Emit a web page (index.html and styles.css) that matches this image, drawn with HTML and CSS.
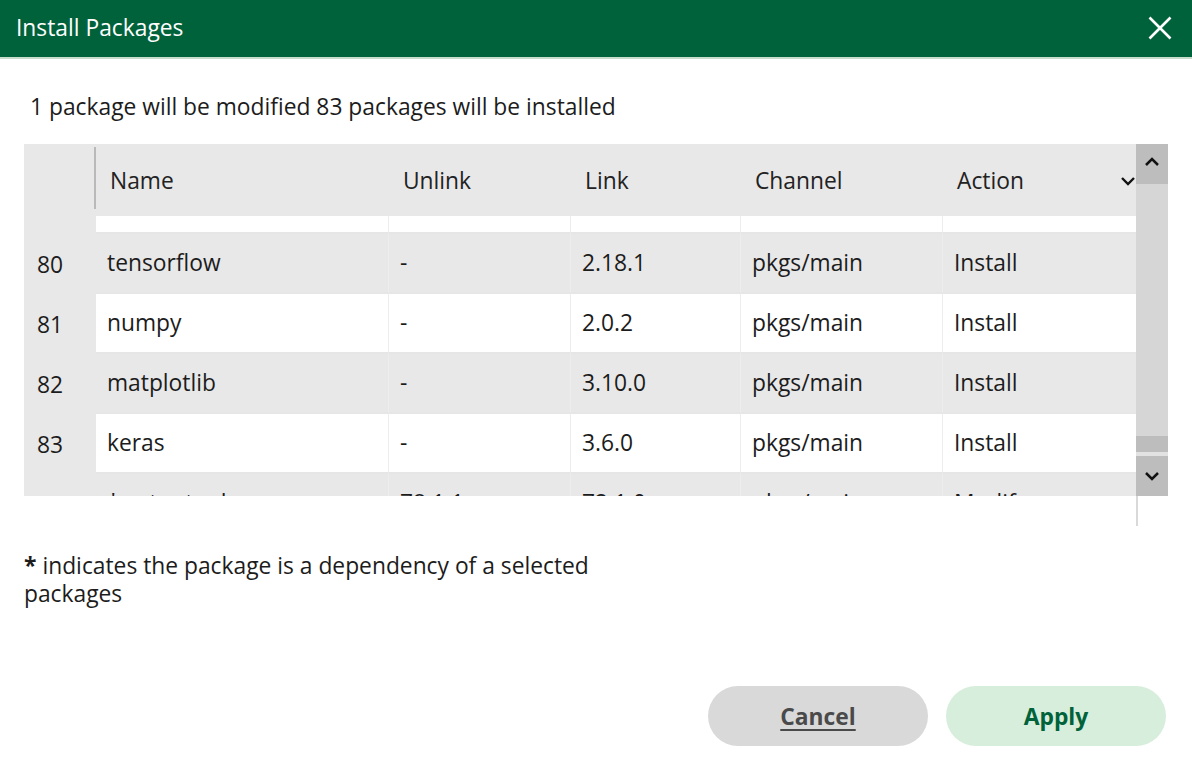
FILE: index.html
```html
<!DOCTYPE html>
<html lang="en">
<head>
<meta charset="utf-8">
<title>Install Packages</title>
<link rel="stylesheet" href="styles.css">
</head>
<body>
<div class="dialog">
  <header class="titlebar">
    <h1 class="title">Install Packages</h1>
    <button class="close" aria-label="Close">
      <svg width="24" height="24" viewBox="0 0 24 24"><path d="M1.5 1.5 L22.5 22.5 M22.5 1.5 L1.5 22.5" stroke="#fff" stroke-width="2.6" fill="none"/></svg>
    </button>
  </header>
  <main class="content">
    <p class="summary">1 package will be modified 83 packages will be installed</p>
    <div class="table-wrap">
      <div class="table">
        <div class="thead">
          <div class="th-index"></div>
          <div class="th c-name">Name</div>
          <div class="th c-unlink">Unlink</div>
          <div class="th c-link">Link</div>
          <div class="th c-channel">Channel</div>
          <div class="th c-action">Action
            <svg class="sort" width="16" height="10" viewBox="0 0 16 10"><path d="M2 2 L8 8 L14 2" stroke="#111" stroke-width="2.4" fill="none"/></svg>
          </div>
        </div>
        <div class="viewport">
          <div class="rows">
            <div class="row odd"><div class="idx"></div><div class="td c-name"></div><div class="td c-unlink"></div><div class="td c-link"></div><div class="td c-channel"></div><div class="td c-action"></div></div>
            <div class="row even"><div class="idx">80</div><div class="td c-name">tensorflow</div><div class="td c-unlink">-</div><div class="td c-link">2.18.1</div><div class="td c-channel">pkgs/main</div><div class="td c-action">Install</div></div>
            <div class="row odd"><div class="idx">81</div><div class="td c-name">numpy</div><div class="td c-unlink">-</div><div class="td c-link">2.0.2</div><div class="td c-channel">pkgs/main</div><div class="td c-action">Install</div></div>
            <div class="row even"><div class="idx">82</div><div class="td c-name">matplotlib</div><div class="td c-unlink">-</div><div class="td c-link">3.10.0</div><div class="td c-channel">pkgs/main</div><div class="td c-action">Install</div></div>
            <div class="row odd"><div class="idx">83</div><div class="td c-name">keras</div><div class="td c-unlink">-</div><div class="td c-link">3.6.0</div><div class="td c-channel">pkgs/main</div><div class="td c-action">Install</div></div>
            <div class="row even"><div class="idx">84</div><div class="td c-name">* setuptools</div><div class="td c-unlink">78.1.1</div><div class="td c-link">72.1.0</div><div class="td c-channel">pkgs/main</div><div class="td c-action">Modify</div></div>
          </div>
        </div>
      </div>
      <div class="vscroll">
        <div class="sbtn sbtn-up">
          <svg width="16" height="10" viewBox="0 0 16 10"><path d="M2 8 L8 2 L14 8" stroke="#111" stroke-width="2.5" fill="none"/></svg>
        </div>
        <div class="track"><div class="thumb"></div></div>
        <div class="sgap"></div>
        <div class="sbtn">
          <svg width="16" height="10" viewBox="0 0 16 10"><path d="M2 2 L8 8 L14 2" stroke="#111" stroke-width="2.5" fill="none"/></svg>
        </div>
      </div>
    </div>
    <div class="hscroll"></div>
    <p class="note"><b class="mark">*</b>indicates the package is a dependency of a selected packages</p>
    <div class="actions">
      <button class="btn btn-cancel">Cancel</button>
      <button class="btn btn-apply">Apply</button>
    </div>
  </main>
</div>
</body>
</html>
```

FILE: styles.css
```css
* { box-sizing: border-box; }
html, body { margin: 0; padding: 0; background: #fff; }
body {
  font-family: "Open Sans", "Noto Sans", sans-serif;
  font-size: 22.8px;
  color: #1c1c1c;
  width: 1192px;
  height: 768px;
  overflow: hidden;
}
.titlebar {
  height: 59px;
  background: #00623a;
  border-bottom: 2px solid #c6dccd;
  display: flex;
  align-items: center;
  justify-content: space-between;
  padding: 0 20px 2px 16px;
}
.title {
  margin: 0;
  font-size: 22.8px;
  font-weight: 400;
  color: #fff;
  line-height: 28px;
}
.close {
  background: none;
  border: 0;
  padding: 0;
  width: 24px;
  height: 24px;
  display: flex;
  cursor: pointer;
}
.content { padding: 0 24px; }
.summary {
  margin: 34px 0 23px 6px;
  line-height: 28px;
}
.table-wrap { display: flex; height: 352px; }
.table { width: 1112px; display: flex; flex-direction: column; }
.thead {
  height: 72px;
  background: #e8e8e8;
  display: flex;
  align-items: center;
}
.th-index {
  width: 72px;
  height: 62px;
  border-right: 2px solid #b9b9b9;
  margin-top: -4px;
  flex: none;
}
.th {
  height: 72px;
  display: flex;
  align-items: center;
  padding-left: 14px;
  flex: none;
  color: #222;
}
.c-name { width: 293px; }
.c-unlink { width: 182px; }
.c-link { width: 170px; }
.c-channel { width: 202px; }
.c-action { width: 193px; }
.th.c-action { justify-content: space-between; padding-right: 0; }
.sort { margin-top: 2px; }
.viewport { height: 280px; overflow: hidden; }
.rows { margin-top: -44px; }
.row { display: flex; height: 60px; }
.idx {
  width: 72px;
  flex: none;
  background: #e8e8e8;
  padding-left: 13px;
  padding-top: 5px;
  display: flex;
  align-items: center;
}
.td {
  flex: none;
  display: flex;
  align-items: center;
  padding-left: 11px;
  padding-bottom: 1px;
  border-top: 2px solid #e6e6e6;
  border-right: 1px solid #ededed;
}
.td.c-action { border-right: 0; }
.odd .td { background: #fff; }
.even .td { background: #e8e8e8; }
.vscroll {
  width: 32px;
  display: flex;
  flex-direction: column;
  background: #d6d6d6;
}
.sbtn {
  height: 40px;
  background: #bdbdbd;
  display: flex;
  align-items: center;
  justify-content: center;
  flex: none;
}
.sbtn-up { padding-bottom: 4px; }
.track { flex: 1; display: flex; flex-direction: column; justify-content: flex-end; }
.thumb { height: 16px; background: #bdbdbd; }
.sgap { height: 4px; background: #e2e2e2; flex: none; }
.hscroll {
  height: 30px;
  width: 1114px;
  border-right: 2px solid #d9d9d9;
}
.note {
  margin: 26px 0 0;
  line-height: 28px;
  max-width: 600px;
}
.mark { font-weight: 700; margin-right: 6px; }
.actions {
  display: flex;
  justify-content: flex-end;
  gap: 18px;
  margin-top: 78px;
  padding-right: 2px;
}
.btn {
  width: 220px;
  height: 60px;
  border: 0;
  border-radius: 30px;
  font-family: inherit;
  font-size: 22.8px;
  font-weight: 700;
  cursor: pointer;
}
.btn-cancel {
  background: #d9d9d9;
  color: #4a4a4a;
  text-decoration: underline;
  text-decoration-thickness: 2px;
  text-underline-offset: 4px;
}
.btn-apply {
  background: #d8eedc;
  color: #00623a;
}
```
